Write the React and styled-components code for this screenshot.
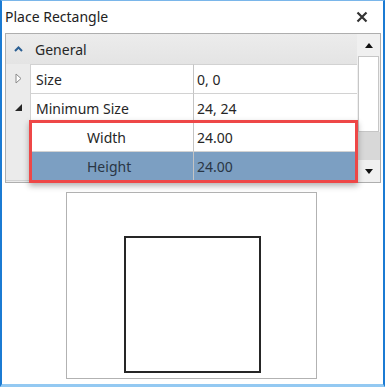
import React from 'react';
import styled, { createGlobalStyle } from 'styled-components';

const GlobalStyle = createGlobalStyle`
  html, body {
    margin: 0;
    padding: 0;
    background: #ffffff;
    overflow: hidden;
  }
  * {
    box-sizing: border-box;
  }
`;

const rows = [
  { name: 'Size', value: '0, 0', expander: 'closed' },
  { name: 'Minimum Size', value: '24, 24', expander: 'open' },
];

const subRows = [
  { name: 'Width', value: '24.00', selected: false },
  { name: 'Height', value: '24.00', selected: true },
];

function App() {
  return (
    <>
      <GlobalStyle />
      <Window>
        <TitleBar>
          <Title>Place Rectangle</Title>
          <CloseBtn>
            <svg width='12' height='12' viewBox='0 0 12 12'>
              <path d='M1.5 1.5 L10.5 10.5 M10.5 1.5 L1.5 10.5' stroke='#333' strokeWidth='2.2' />
            </svg>
          </CloseBtn>
        </TitleBar>

        <PropertyGrid>
          <GridBody>
            <CategoryRow>
              <Gutter>
                <svg width='9' height='6' viewBox='0 0 9 6'>
                  <path d='M1 5 L4.5 1.5 L8 5' fill='none' stroke='#2b5f93' strokeWidth='2' />
                </svg>
              </Gutter>
              <CategoryLabel>General</CategoryLabel>
            </CategoryRow>

            {rows.map((row) => (
              <Row key={row.name}>
                <Gutter>
                  {row.expander === 'closed' ? (
                    <svg width='7' height='11' viewBox='0 0 7 11'>
                      <path d='M1 1 L6 5.5 L1 10 Z' fill='#fff' stroke='#8a8a8a' strokeWidth='1' />
                    </svg>
                  ) : (
                    <svg width='7' height='7' viewBox='0 0 7 7'>
                      <path d='M7 0 L7 7 L0 7 Z' fill='#262626' />
                    </svg>
                  )}
                </Gutter>
                <NameCell>{row.name}</NameCell>
                <ValueCell>{row.value}</ValueCell>
              </Row>
            ))}

            <HighlightGroup>
              {subRows.map((row) => (
                <Row key={row.name}>
                  <Gutter />
                  <NameCell $selected={row.selected} $indent>
                    {row.name}
                  </NameCell>
                  <ValueCell $selected={row.selected}>{row.value}</ValueCell>
                </Row>
              ))}
              <Highlight />
            </HighlightGroup>
          </GridBody>

          <ScrollBar>
            <ScrollBtn>
              <svg width='8' height='5' viewBox='0 0 8 5'>
                <path d='M0 5 L4 0 L8 5 Z' fill='#111' />
              </svg>
            </ScrollBtn>
            <Thumb />
            <Track />
            <ScrollBtn>
              <svg width='8' height='5' viewBox='0 0 8 5'>
                <path d='M0 0 L8 0 L4 5 Z' fill='#111' />
              </svg>
            </ScrollBtn>
          </ScrollBar>
        </PropertyGrid>

        <PreviewBox>
          <Shape />
        </PreviewBox>
      </Window>
    </>
  );
}

export default App;

const Window = styled.div`
  width: 385px;
  height: 387px;
  background: #ffffff;
  border-left: 2px solid #1b7bd3;
  border-right: 2px solid #1b7bd3;
  border-top: 1px solid #7ab6ea;
  border-bottom: 3px solid #93c9f2;
  display: flex;
  flex-direction: column;
  font-family: 'Noto Sans', 'Open Sans', sans-serif;
  color: #262626;
`;

const TitleBar = styled.div`
  height: 32px;
  display: flex;
  align-items: center;
  justify-content: space-between;
  padding: 0 14px 2px 3px;
`;

const Title = styled.div`
  font-size: 14px;
  color: #222;
`;

const CloseBtn = styled.div`
  display: flex;
  align-items: center;
  justify-content: center;
  width: 14px;
  height: 14px;
  margin-top: 2px;
`;

const PropertyGrid = styled.div`
  margin: 0 2px 0 3px;
  height: 150px;
  border: 1px solid #aeaeae;
  background: #ebebeb;
  display: flex;
`;

const GridBody = styled.div`
  flex: 1;
  display: flex;
  flex-direction: column;
  font-size: 13px;
`;

const CategoryRow = styled.div`
  height: 30px;
  display: flex;
  align-items: center;
  background: linear-gradient(#ececec, #e4e4e4);
`;

const Gutter = styled.div`
  width: 24px;
  height: 100%;
  display: flex;
  align-items: center;
  justify-content: center;
  padding-left: 1px;
`;

const CategoryLabel = styled.div`
  padding-left: 5px;
  font-size: 14px;
  color: #262626;
`;

const Row = styled.div`
  height: 29px;
  display: grid;
  grid-template-columns: 24px 164px 1fr;
`;

const NameCell = styled.div`
  display: flex;
  align-items: center;
  padding-left: ${(p) => (p.$indent ? '56px' : '5px')};
  background: ${(p) => (p.$selected ? '#7c9fc2' : '#ffffff')};
  color: ${(p) => (p.$selected ? '#2a3645' : '#262626')};
  border-left: 1px solid #d2d2d2;
  border-right: 1px solid #c4c4c4;
  border-top: 1px solid #d2d2d2;
  font-size: 14px;
`;

const ValueCell = styled.div`
  display: flex;
  align-items: center;
  padding-left: 3px;
  background: ${(p) => (p.$selected ? '#7c9fc2' : '#ffffff')};
  color: ${(p) => (p.$selected ? '#2a3645' : '#262626')};
  border-top: 1px solid #d2d2d2;
  font-size: 14px;
`;

const HighlightGroup = styled.div`
  position: relative;
  border-bottom: 1px solid #d2d2d2;
`;

const Highlight = styled.div`
  position: absolute;
  left: 23px;
  right: -1px;
  top: -2px;
  bottom: -3px;
  border: 3px solid #ee4747;
  box-shadow: 0 3px 6px rgba(0, 0, 0, 0.3);
  pointer-events: none;
`;

const ScrollBar = styled.div`
  width: 23px;
  display: flex;
  flex-direction: column;
  background: #f0f0f0;
`;

const ScrollBtn = styled.div`
  height: 22px;
  display: flex;
  align-items: center;
  justify-content: center;
  background: #f0f0f0;
`;

const Thumb = styled.div`
  height: 76px;
  margin: 0 1px;
  background: #ffffff;
  border: 1px solid #c6c6c6;
`;

const Track = styled.div`
  flex: 1;
  background: #d8d8d8;
`;

const PreviewBox = styled.div`
  align-self: center;
  width: 251px;
  height: 187px;
  margin-top: 9px;
  margin-left: -3px;
  border: 1px solid #b2b2b2;
  background: #ffffff;
  display: flex;
  align-items: flex-end;
  justify-content: center;
  padding-bottom: 5px;
`;

const Shape = styled.div`
  width: 137px;
  height: 137px;
  margin-left: 2px;
  border: 2px solid #262626;
  background: #ffffff;
`;
